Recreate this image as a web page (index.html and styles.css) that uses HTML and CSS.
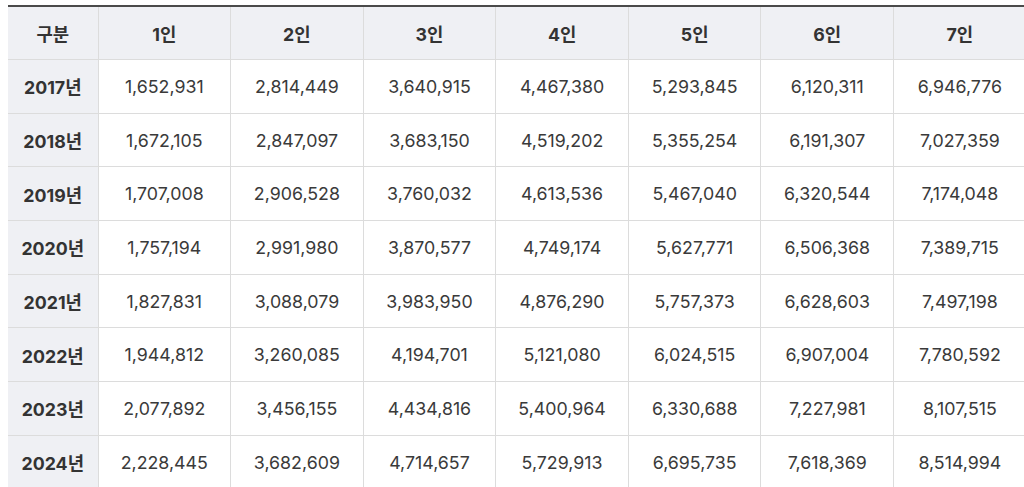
FILE: index.html
```html
<!DOCTYPE html>
<html lang="ko">
<head>
<meta charset="utf-8">
<link rel="stylesheet" href="styles.css">
</head>
<body>
<table class="stat">
  <colgroup>
    <col class="c-head">
    <col span="7" class="c-data">
  </colgroup>
  <thead>
    <tr><th>구분</th><th>1인</th><th>2인</th><th>3인</th><th>4인</th><th>5인</th><th>6인</th><th>7인</th></tr>
  </thead>
  <tbody>
    <tr><th>2017년</th><td>1,652,931</td><td>2,814,449</td><td>3,640,915</td><td>4,467,380</td><td>5,293,845</td><td>6,120,311</td><td>6,946,776</td></tr>
    <tr><th>2018년</th><td>1,672,105</td><td>2,847,097</td><td>3,683,150</td><td>4,519,202</td><td>5,355,254</td><td>6,191,307</td><td>7,027,359</td></tr>
    <tr><th>2019년</th><td>1,707,008</td><td>2,906,528</td><td>3,760,032</td><td>4,613,536</td><td>5,467,040</td><td>6,320,544</td><td>7,174,048</td></tr>
    <tr><th>2020년</th><td>1,757,194</td><td>2,991,980</td><td>3,870,577</td><td>4,749,174</td><td>5,627,771</td><td>6,506,368</td><td>7,389,715</td></tr>
    <tr><th>2021년</th><td>1,827,831</td><td>3,088,079</td><td>3,983,950</td><td>4,876,290</td><td>5,757,373</td><td>6,628,603</td><td>7,497,198</td></tr>
    <tr><th>2022년</th><td>1,944,812</td><td>3,260,085</td><td>4,194,701</td><td>5,121,080</td><td>6,024,515</td><td>6,907,004</td><td>7,780,592</td></tr>
    <tr><th>2023년</th><td>2,077,892</td><td>3,456,155</td><td>4,434,816</td><td>5,400,964</td><td>6,330,688</td><td>7,227,981</td><td>8,107,515</td></tr>
    <tr><th>2024년</th><td>2,228,445</td><td>3,682,609</td><td>4,714,657</td><td>5,729,913</td><td>6,695,735</td><td>7,618,369</td><td>8,514,994</td></tr>
  </tbody>
</table>
</body>
</html>
```
FILE: styles.css
```css
html, body {
  margin: 0;
  padding: 0;
  overflow: hidden;
  background: #ffffff;
}
body {
  padding: 5px 0 0 8px;
  font-family: Inter, "Noto Sans CJK KR", sans-serif;
  color: #333;
}
.stat {
  border-collapse: collapse;
  table-layout: fixed;
  width: 1018px;
  border-top: 2px solid #4a4a4a;
  font-size: 17.8px;
}
.c-head { width: 90px; }
.c-data { width: 132.6px; }
.stat th, .stat td {
  height: 52.7px;
  padding: 0;
  text-align: center;
  vertical-align: middle;
  border: 1px solid #dcdcdc;
}
.stat thead th { height: 52px; }
.stat tr > :first-child { border-left: none; }
.stat th {
  background: #eff0f4;
  font-weight: 700;
  color: #333;
}
.stat td {
  font-weight: 400;
  color: #3a3a3a;
}
```
